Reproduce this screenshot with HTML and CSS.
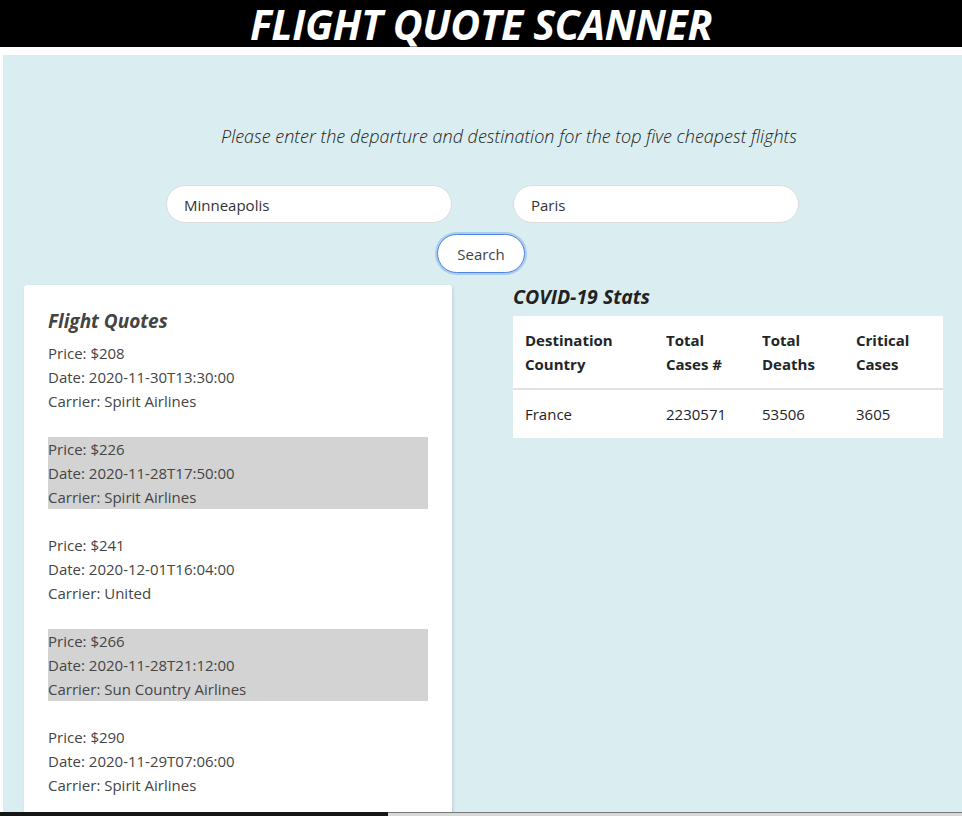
FILE: index.html
```html
<!DOCTYPE html>
<html>
<head>
<meta charset="utf-8">
<link rel="stylesheet" href="styles.css">
<title>Flight Quote Scanner</title>
</head>
<body>
<header class="topbar"><h1 class="brand">FLIGHT QUOTE SCANNER</h1></header>
<main class="main">
  <p class="intro">Please enter the departure and destination for the top five cheapest flights</p>
  <div class="inputs">
    <input class="field" type="text" value="Minneapolis">
    <input class="field" type="text" value="Paris">
  </div>
  <div class="actions"><button class="search">Search</button></div>
  <div class="results">
    <section class="card">
      <h2 class="card-title">Flight Quotes</h2>
      <div class="quote"><div>Price: $208</div><div>Date: 2020-11-30T13:30:00</div><div>Carrier: Spirit Airlines</div></div>
      <div class="quote alt"><div>Price: $226</div><div>Date: 2020-11-28T17:50:00</div><div>Carrier: Spirit Airlines</div></div>
      <div class="quote"><div>Price: $241</div><div>Date: 2020-12-01T16:04:00</div><div>Carrier: United</div></div>
      <div class="quote alt"><div>Price: $266</div><div>Date: 2020-11-28T21:12:00</div><div>Carrier: Sun Country Airlines</div></div>
      <div class="quote"><div>Price: $290</div><div>Date: 2020-11-29T07:06:00</div><div>Carrier: Spirit Airlines</div></div>
    </section>
    <section class="stats">
      <h2 class="stats-title">COVID-19 Stats</h2>
      <table class="table">
        <thead>
          <tr><th class="c1">Destination Country</th><th class="c2">Total Cases #</th><th class="c3">Total Deaths</th><th class="c4">Critical Cases</th></tr>
        </thead>
        <tbody>
          <tr><td>France</td><td>2230571</td><td>53506</td><td>3605</td></tr>
        </tbody>
      </table>
    </section>
  </div>
</main>
<div class="taskbar"><div class="tb-dark"></div><div class="tb-light"></div></div>
</body>
</html>
```
FILE: styles.css
```css
html, body {
  margin: 0;
  padding: 0;
  height: 816px;
  overflow: hidden;
  background: #fff;
  font-family: "Open Sans", "Noto Sans", sans-serif;
}
.topbar {
  background: #000;
  height: 47px;
  display: flex;
  justify-content: center;
  align-items: center;
}
.brand {
  margin: 0;
  padding-top: 2px;
  color: #fff;
  font-family: "Open Sans", sans-serif;
  font-weight: 700;
  font-style: italic;
  font-size: 41px;
  line-height: 45px;
  letter-spacing: -0.4px;
}
.main {
  margin: 8px 0 0 3px;
  background: #daedf0;
  min-height: 800px;
  padding-top: 69px;
  color: #454545;
}
.intro {
  margin: 0 0 37px 0;
  text-align: center;
  padding-left: 53px;
  font-style: italic;
  font-weight: 300;
  font-size: 18px;
  line-height: 24px;
  color: #222;
}
.inputs {
  display: flex;
  justify-content: center;
  gap: 61px;
}
.field {
  width: 286px;
  height: 38px;
  box-sizing: border-box;
  border: 1px solid #dcdcdc;
  border-radius: 19px;
  background: #fff;
  padding: 1px 17px 0;
  font-family: inherit;
  font-size: 15px;
  color: #333;
  outline: none;
}
.actions {
  display: flex;
  justify-content: center;
  margin-top: 11px;
}
.search {
  width: 88px;
  height: 39px;
  border-radius: 20px;
  border: 1px solid #4a86e0;
  box-shadow: 0 0 0 2px rgba(120, 165, 235, 0.45);
  background: #fff;
  font-family: inherit;
  font-size: 15px;
  color: #444;
  margin-left: -3px;
}
.results {
  display: grid;
  grid-template-columns: 428px 430px;
  column-gap: 61px;
  padding-left: 21px;
  margin-top: 12px;
}
.card {
  background: #fff;
  border-radius: 3px;
  box-shadow: 1px 1px 3px rgba(0, 0, 0, 0.12);
  padding: 24px 24px 24px;
}
.card-title {
  margin: 0 0 8px;
  font-size: 19px;
  line-height: 24px;
  font-weight: 700;
  font-style: italic;
  color: #444;
}
.quote {
  font-size: 15px;
  line-height: 24px;
  margin-bottom: 24px;
}
.quote.alt {
  background: #d3d3d3;
}
.stats-title {
  margin: 0 0 7px;
  font-size: 19.5px;
  line-height: 24px;
  font-weight: 700;
  font-style: italic;
  color: #222;
}
.table {
  width: 430px;
  border-collapse: collapse;
  background: #fff;
  color: #212529;
  font-size: 15px;
  line-height: 24px;
}
.table th, .table td {
  text-align: left;
  vertical-align: top;
  padding: 12px;
}
.table th {
  font-weight: 700;
  border-bottom: 2px solid #dee2e6;
}
.c1 { width: 117px; }
.c2 { width: 72px; }
.c3 { width: 70px; }
.c4 { width: 75px; }
.taskbar {
  position: fixed;
  left: 0;
  right: 0;
  bottom: 0;
  height: 4px;
  display: flex;
}
.tb-dark { width: 388px; background: #161616; }
.tb-light { flex: 1; background: #d8d8d8; border-top: 1px solid #777; }
```
